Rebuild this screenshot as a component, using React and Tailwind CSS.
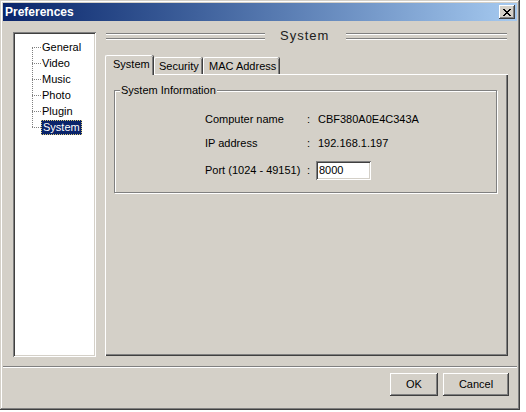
import React from 'react';

const font = "font-['Liberation_Sans',Arial,sans-serif]";

const raised =
  'shadow-[inset_-1px_-1px_#404040,inset_1px_1px_#ffffff,inset_-2px_-2px_#808080,inset_2px_2px_#d4d0c8]';
const sunken =
  'shadow-[inset_1px_1px_#808080,inset_-1px_-1px_#ffffff,inset_2px_2px_#404040,inset_-2px_-2px_#d4d0c8]';

const treeItems = ['General', 'Video', 'Music', 'Photo', 'Plugin', 'System'];

const CloseGlyph = () => (
  <svg width="8" height="7" viewBox="0 0 8 7" shapeRendering="crispEdges">
    <path
      fill="#000"
      d="M0 0h2v1H0zM6 0h2v1H6zM1 1h2v1H1zM5 1h2v1H5zM2 2h4v1H2zM3 3h2v1H3zM2 4h4v1H2zM1 5h2v1H1zM5 5h2v1H5zM0 6h2v1H0zM6 6h2v1H6z"
    />
  </svg>
);

const EtchedLines = ({ className }) => (
  <div className={`flex h-[7px] flex-col justify-between ${className}`}>
    <div className="h-[2px] border-t border-b border-t-[#808080] border-b-white" />
    <div className="h-[2px] border-t border-b border-t-[#808080] border-b-white" />
  </div>
);

const Tree = () => (
  <div className={`h-[325px] w-[83px] bg-white ${sunken}`}>
    <ul className="relative pl-[19px] pt-[7px]">
      <div className="absolute left-[19px] top-[15px] h-[80px] border-l border-dotted border-[#808080]" />
      {treeItems.map((item) => {
        const selected = item === 'System';
        return (
          <li key={item} className="flex h-[16px] items-center">
            <span className="w-[9px] border-t border-dotted border-[#808080]" />
            {selected ? (
              <span className="flex h-[15px] items-center bg-[#0a246a] px-[2px] text-white outline-1 -outline-offset-1 outline-dotted outline-[#d8c878]">
                {item}
              </span>
            ) : (
              <span className="pl-[1px] text-black">{item}</span>
            )}
          </li>
        );
      })}
    </ul>
  </div>
);

const Tab = ({ label, selected, className = '' }) => (
  <div
    className={`flex items-center whitespace-nowrap rounded-t-[2px] border-l border-t border-white shadow-[inset_-1px_0_#808080,1px_0_#404040] ${
      selected ? 'relative z-10 -mb-px h-[20px] bg-[#d4d0c8] pb-[2px]' : 'h-[17px]'
    } ${className}`}
  >
    {label}
  </div>
);

const Row = ({ label, children, className = '' }) => (
  <div className={`flex items-center ${className}`}>
    <span className="w-[102px]">{label}</span>
    <span className="w-[9px]">:</span>
    {children}
  </div>
);

export default function App() {
  return (
    <div className={`h-[412px] w-[526px] bg-white text-[11px] text-black ${font}`}>
      <div className="flex h-[410px] w-[520px] flex-col bg-[#d4d0c8] p-[3px] shadow-[inset_-1px_-1px_#404040,inset_1px_1px_#d4d0c8,inset_-2px_-2px_#808080,inset_2px_2px_#ffffff]">
        {/* title bar */}
        <div className="flex h-[18px] items-center justify-between bg-gradient-to-r from-[#0a246a] to-[#a6caf0] pl-[2px] pr-[2px]">
          <span className="text-[12px] font-bold text-white">Preferences</span>
          <button className={`flex h-[14px] w-[16px] items-center justify-center bg-[#d4d0c8] ${raised}`}>
            <CloseGlyph />
          </button>
        </div>

        {/* body */}
        <div className="flex h-[345px] gap-[9px] pl-[10px]">
          <div className="pt-[11px]">
            <Tree />
          </div>

          <div className="flex w-[403px] flex-col pt-[5px]">
            <div className="flex h-[20px] items-center">
              <EtchedLines className="ml-[1px] w-[159px]" />
              <span className="ml-[15px] text-[13px] tracking-[1px] text-[#202020]">System</span>
              <EtchedLines className="ml-[17px] mr-[1px] flex-1" />
            </div>

            <div className="mt-[9px] flex h-[19px] items-end">
              <Tab label="System" selected className="w-[48px] pl-[7px]" />
              <Tab label="Security" className="ml-px w-[48px] pl-[4px]" />
              <Tab label="MAC Address" className="ml-px w-[76px] pl-[5px]" />
            </div>

            <div className="h-[282px] border-l border-t border-white px-[8px] pt-[15px] shadow-[inset_-1px_-1px_#404040,inset_-2px_-2px_#808080]">
              <div className="relative h-[103px] w-[383px] border border-[#808080] shadow-[inset_1px_1px_#ffffff,1px_1px_#ffffff]">
                <span className="absolute -top-[9px] left-[5px] bg-[#d4d0c8] px-px">System Information</span>
                <div className="flex flex-col pl-[90px] pt-[16px]">
                  <Row label="Computer name" className="h-[24px]">
                    <span className="pl-[2px]">CBF380A0E4C343A</span>
                  </Row>
                  <Row label="IP address" className="h-[24px]">
                    <span className="pl-[2px]">192.168.1.197</span>
                  </Row>
                  <Row label="Port (1024 - 49151)" className="h-[30px]">
                    <div className={`flex h-[19px] w-[55px] items-center bg-white pl-[3px] ${sunken}`}>8000</div>
                  </Row>
                </div>
              </div>
            </div>
          </div>
        </div>

        {/* separator */}
        <div className="h-[2px] border-t border-b border-t-[#808080] border-b-white" />

        {/* buttons */}
        <div className="flex justify-end gap-[5px] pr-[8px] pt-[5px]">
          <button className={`h-[23px] w-[48px] bg-[#d4d0c8] ${raised}`}>OK</button>
          <button className={`h-[23px] w-[66px] bg-[#d4d0c8] ${raised}`}>Cancel</button>
        </div>
      </div>
    </div>
  );
}
